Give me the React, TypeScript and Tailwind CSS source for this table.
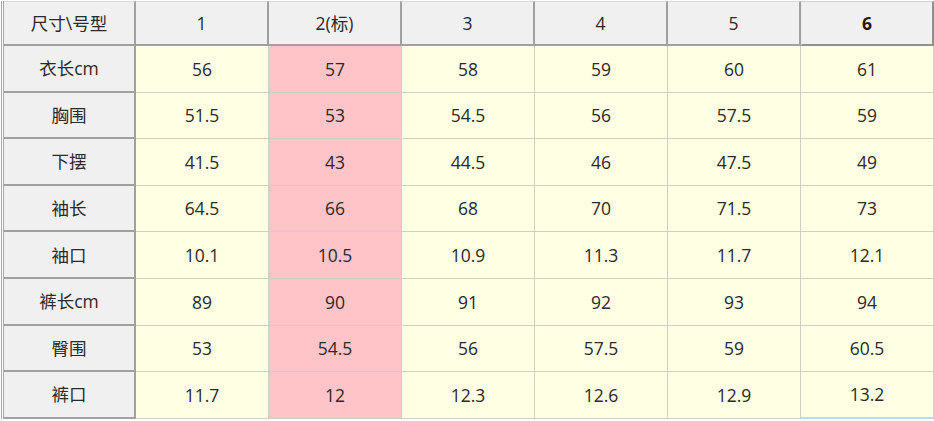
import React from "react";

const cols = ["1", "2(标)", "3", "4", "5", "6"];
const rows: [string, string[]][] = [
  ["衣长cm", ["56", "57", "58", "59", "60", "61"]],
  ["胸围", ["51.5", "53", "54.5", "56", "57.5", "59"]],
  ["下摆", ["41.5", "43", "44.5", "46", "47.5", "49"]],
  ["袖长", ["64.5", "66", "68", "70", "71.5", "73"]],
  ["袖口", ["10.1", "10.5", "10.9", "11.3", "11.7", "12.1"]],
  ["裤长cm", ["89", "90", "91", "92", "93", "94"]],
  ["臀围", ["53", "54.5", "56", "57.5", "59", "60.5"]],
  ["裤口", ["11.7", "12", "12.3", "12.6", "12.9", "13.2"]],
];

const font = { fontFamily: '"Open Sans", "Noto Sans CJK SC", sans-serif' };

export default function App() {
  return (
    <div className="w-[934px] h-[421px] bg-white overflow-hidden text-[17.5px] text-[#2a2a2a]" style={font}>
      <div className="ml-[1px] mt-[1px] border-l-[3px] border-double border-[#a8a8a8] grid grid-cols-[132px_repeat(6,133px)] grid-rows-[45px_repeat(8,46.6px)] w-fit">
        <div className="bg-[#f0f0f0] border-r-2 border-b-2 border-[#a0a0a0] border-t border-t-[#d8d8d8] flex items-center justify-center">
          尺寸\号型
        </div>
        {cols.map((c, i) => (
          <div
            key={c}
            className={
              i === 5
                ? "bg-[#f0f0f0] border-r-2 border-b-2 border-[#909090] border-t border-l border-t-[#d0d0d0] border-l-[#e8e8e8] flex items-center justify-center font-bold text-[#1a1a1a]"
                : "bg-[#f0f0f0] border-r-2 border-b-2 border-[#a0a0a0] border-t border-t-[#d8d8d8] flex items-center justify-center"
            }
          >
            {c}
          </div>
        ))}
        {rows.map(([label, vals], r) => (
          <React.Fragment key={label}>
            <div className="bg-[#f0f0f0] border-r-2 border-b-2 border-[#a0a0a0] flex items-center justify-center">
              {label}
            </div>
            {vals.map((v, i) => (
              <div
                key={i}
                className={
                  (i === 1 ? "bg-[#ffc4c8] " : "bg-[#ffffe3] ") +
                  (r === 7 && i === 5
                    ? "border-r border-b-2 border-r-[#cfcfc4] border-b-[#b8dcf0] "
                    : "border-r border-b border-[#cfcfc4] ") +
                  "flex items-center justify-center"
                }
              >
                {v}
              </div>
            ))}
          </React.Fragment>
        ))}
      </div>
    </div>
  );
}
